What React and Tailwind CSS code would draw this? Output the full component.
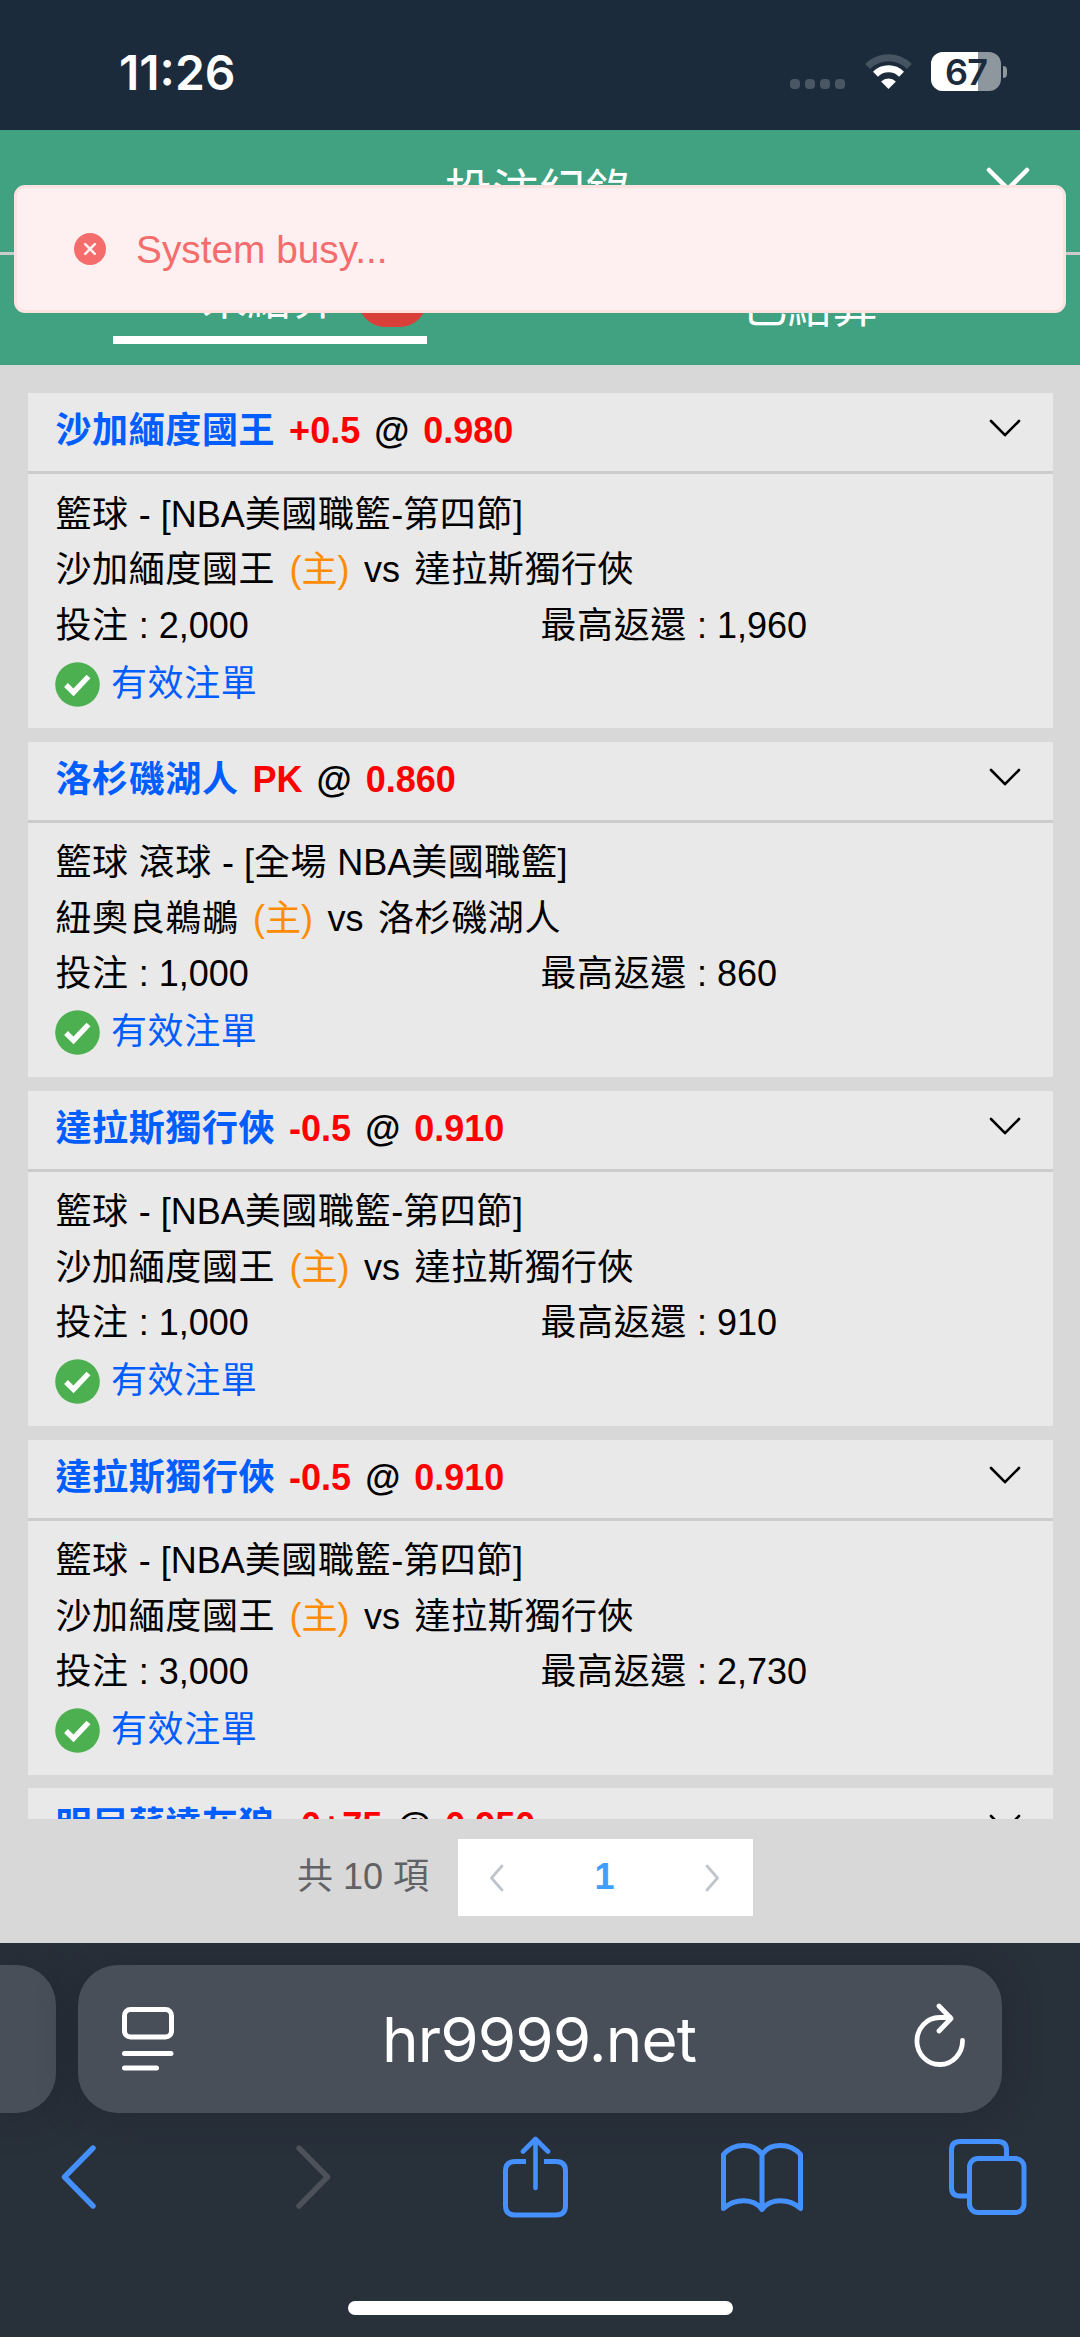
// src/App.jsx
import React from 'react';

const bets = [
  {
    pick: '沙加緬度國王',
    line: '+0.5',
    odds: '0.980',
    league: '籃球 - [NBA美國職籃-第四節]',
    home: '沙加緬度國王',
    away: '達拉斯獨行俠',
    stake: '2,000',
    payout: '1,960'
  },
  {
    pick: '洛杉磯湖人',
    line: 'PK',
    odds: '0.860',
    league: '籃球 滾球 - [全場 NBA美國職籃]',
    home: '紐奧良鵜鶘',
    away: '洛杉磯湖人',
    stake: '1,000',
    payout: '860'
  },
  {
    pick: '達拉斯獨行俠',
    line: '-0.5',
    odds: '0.910',
    league: '籃球 - [NBA美國職籃-第四節]',
    home: '沙加緬度國王',
    away: '達拉斯獨行俠',
    stake: '1,000',
    payout: '910'
  },
  {
    pick: '達拉斯獨行俠',
    line: '-0.5',
    odds: '0.910',
    league: '籃球 - [NBA美國職籃-第四節]',
    home: '沙加緬度國王',
    away: '達拉斯獨行俠',
    stake: '3,000',
    payout: '2,730'
  },
  {
    pick: '明尼蘇達灰狼',
    line: '-0+75',
    odds: '0.950'
  }
];

// Chinese runs are set slightly looser than the latin text
const Zh = ({ children }) =>
  children.split(/([\u4e00-\u9fff]+)/).map((part, i) =>
    i % 2 ? (
      <span key={i} className="tracking-[0.6px]">{part}</span>
    ) : (
      part
    )
  );

const StatusBar = () => (
  <div className="flex h-[130px] shrink-0 bg-[#1b2b3b] text-white">
    <div className="ml-[119px] mt-[44px] w-[671px] font-['Inter',sans-serif] text-[48px] font-semibold leading-[57px]">
      11:26
    </div>
    <div className="mt-[79px] flex h-[10px] gap-[5px]">
      <span className="size-[10px] rounded-[4px] bg-[#4a5663]" />
      <span className="size-[10px] rounded-[4px] bg-[#4a5663]" />
      <span className="size-[10px] rounded-[4px] bg-[#4a5663]" />
      <span className="size-[10px] rounded-[4px] bg-[#4a5663]" />
    </div>
    <svg className="ml-[20px] mt-[53px]" width="47" height="37" viewBox="0 0 47 37" fill="none">
      <path d="M2.7 13.4a29.5 29.5 0 0 1 41.6 0" stroke="#465361" strokeWidth="7" />
      <path d="M10.5 21.2a18.4 18.4 0 0 1 26 0" stroke="#fff" strokeWidth="7" />
      <path d="M23.5 36l-7.4-7.6a10.6 10.6 0 0 1 14.8 0z" fill="#fff" />
    </svg>
    <div className="relative ml-[19px] mt-[52px] flex h-[39px] w-[70px] overflow-hidden rounded-[12px] bg-[#8e969e]">
      <span className="w-[47px] bg-white" />
      <span className="absolute inset-0 text-center font-['Inter',sans-serif] text-[36px] font-semibold leading-[40px] tracking-[-1px] text-[#1b2b3b]">
        67
      </span>
    </div>
    <span className="ml-[2px] mt-[66px] h-[12px] w-[4px] rounded-r-[4px] bg-[#8e969e]" />
  </div>
);

const Toast = () => (
  <div className="absolute left-[14px] top-[185px] z-10 flex h-[128px] w-[1052px] items-center rounded-[11px] border-[3px] border-[#fde2e2] bg-[#fef0f0] pl-[57px]">
    <svg width="32" height="32" viewBox="0 0 32 32">
      <circle cx="16" cy="16" r="16" fill="#f56c6c" />
      <path d="M11.2 11.2l9.6 9.6M20.8 11.2l-9.6 9.6" stroke="#fef0f0" strokeWidth="2.6" strokeLinecap="round" />
    </svg>
    <span className="ml-[30px] mt-[2px] text-[38.8px] leading-[42px] text-[#f56c6c]">System busy...</span>
  </div>
);

const Header = () => (
  <header className="h-[235px] shrink-0 bg-[#40a280] text-white">
    <div className="flex h-[125px] items-center justify-end border-b-[3px] border-[#ccc] pr-[49px]">
      <h1 className="mr-[352px] mt-[2px] text-[47px] leading-[60px]">投注紀錄</h1>
      <svg className="mt-[-4px]" width="46" height="46" viewBox="0 0 46 46" fill="none">
        <path d="M4 4l38 38M42 4L4 42" stroke="#fff" strokeWidth="4.5" strokeLinecap="round" />
      </svg>
    </div>
    <div className="flex h-[110px]">
      <div className="flex w-1/2 justify-center">
        <div className="flex h-[89px] w-[314px] items-start border-b-[8px] border-white pl-[89px] pt-[15px]">
          <span className="text-[45px] leading-[60px]">未結算</span>
          <span className="ml-[21px] mt-[2px] h-[55px] w-[69px] rounded-full bg-[#d9403a] text-center text-[36px] leading-[54px]">10</span>
        </div>
      </div>
      <div className="flex w-1/2 justify-center pt-[23px] text-[45px] leading-[60px]">已結算</div>
    </div>
  </header>
);

const BetCard = ({ bet }) => (
  <div className="mb-[13.85px] h-[335px] bg-[#e9e9e9] text-[36px] text-black">
    <div className="flex h-[81px] justify-between border-b-[3px] border-[#ccc] pl-[28px] pr-[31px]">
      <div className="flex gap-[14px] whitespace-nowrap pt-[10px] font-bold leading-[55px]">
        <span className="text-[#005dff]"><Zh>{bet.pick}</Zh></span>
        <span className="text-[#f00]">{bet.line}</span>
        <span>@</span>
        <span className="text-[#f00]">{bet.odds}</span>
      </div>
      <svg className="mt-[25px]" width="34" height="20" viewBox="0 0 34 20" fill="none">
        <path d="M3 3l14 14.2L31 3" stroke="#000" strokeWidth="2.6" strokeLinecap="round" strokeLinejoin="round" />
      </svg>
    </div>
    {bet.league && (
      <div className="pl-[28px] pt-[12.5px] leading-[55.5px]">
        <div><Zh>{bet.league}</Zh></div>
        <div className="flex gap-[14.5px]">
          <span><Zh>{bet.home}</Zh></span>
          <span className="text-[#ff8c00]">(主)</span>
          <span>vs</span>
          <span><Zh>{bet.away}</Zh></span>
        </div>
        <div className="flex">
          <span className="w-[485px]"><Zh>{`投注 : ${bet.stake}`}</Zh></span>
          <span><Zh>{`最高返還 : ${bet.payout}`}</Zh></span>
        </div>
        <div className="ml-[-1px] mt-[9px] flex h-[44px] items-center">
          <svg width="45" height="45" viewBox="0 0 45 45" fill="none">
            <circle cx="22.5" cy="22.5" r="22.3" fill="#4caf50" />
            <path d="M11 23l7.5 7.4L33.5 14.5" stroke="#fff" strokeWidth="5.4" />
          </svg>
          <span className="ml-[11.5px] mt-[-1px] leading-[44px] text-[#005dff]"><Zh>有效注單</Zh></span>
        </div>
      </div>
    )}
  </div>
);

const Pagination = () => (
  <div className="flex h-[124px] shrink-0 pl-[297px] pt-[20px] text-[36px] leading-[75px]">
    <span className="w-[161px] text-[#606266]">共 10 項</span>
    <div className="flex h-[77px] w-[295px] items-center justify-between bg-white pl-[31px] pr-[33px]">
      <svg width="16" height="28" viewBox="0 0 16 28" fill="none">
        <path d="M13 2L2.5 14 13 26" stroke="#c0c4cc" strokeWidth="2.8" strokeLinecap="round" strokeLinejoin="round" />
      </svg>
      <span className="mt-[-2px] font-bold text-[#409eff]">1</span>
      <svg width="16" height="28" viewBox="0 0 16 28" fill="none">
        <path d="M3 2l10.5 12L3 26" stroke="#c0c4cc" strokeWidth="2.8" strokeLinecap="round" strokeLinejoin="round" />
      </svg>
    </div>
  </div>
);

const BrowserBar = () => (
  <footer className="h-[394px] shrink-0 overflow-hidden bg-[#28303a] pt-[22px]">
    <div className="flex h-[148px]">
      <div className="w-[56px] rounded-r-[40px] bg-[#484f59] shadow-[0_0_36px_rgba(28,34,44,0.5)]" />
      <div className="ml-[22px] flex w-[924px] items-center rounded-[40px] bg-[#484f59] pl-[44px] text-white shadow-[0_0_36px_rgba(28,34,44,0.5)]">
        <svg width="52" height="64" viewBox="0 0 52 64" fill="none" stroke="#fff" strokeWidth="5" strokeLinecap="round">
          <rect x="2.5" y="2.5" width="47" height="27.5" rx="6" />
          <path d="M2.5 46.5h46.5M2.5 61h32" />
        </svg>
        <span className="ml-[208px] mt-[2px] w-[530px] font-['Inter',sans-serif] text-[62px] leading-[76px] tracking-[-0.9px]">hr9999.net</span>
        <svg className="mt-[-6px] shrink-0" width="54" height="68" viewBox="0 0 54 68" fill="none" stroke="#fff" strokeWidth="4.8" strokeLinecap="round" strokeLinejoin="round">
          <path d="M50.5 38.5A22.8 23.5 0 1 1 27.5 15.5H38" />
          <path d="M27 4l12 12.5L27 29" />
        </svg>
      </div>
    </div>
    <div className="mt-[23px] flex h-[82px] items-center">
      <svg className="ml-[61px]" width="36" height="64" viewBox="0 0 36 64" fill="none">
        <path d="M32 3L3.5 32 32 61" stroke="#4590ff" strokeWidth="5.4" strokeLinecap="round" strokeLinejoin="round" />
      </svg>
      <svg className="ml-[199px]" width="36" height="64" viewBox="0 0 36 64" fill="none">
        <path d="M3 3l28.5 29L3 61" stroke="#4c515a" strokeWidth="5.4" strokeLinecap="round" strokeLinejoin="round" />
      </svg>
      <svg className="ml-[171px]" width="65" height="82" viewBox="0 0 65 82" fill="none" stroke="#4590ff" strokeWidth="5">
        <path d="M23 25.5H12q-9.5 0-9.5 9.5v34.5q0 9.5 9.5 9.5h41q9.5 0 9.5-9.5V35q0-9.5-9.5-9.5H41" />
        <path d="M32.5 52V4M20 15.5L32.5 3 45 15.5" strokeLinecap="round" strokeLinejoin="round" strokeWidth="4.6" />
      </svg>
      <svg className="ml-[153px]" width="82" height="70" viewBox="0 0 82 70" fill="none" stroke="#4590ff" strokeWidth="5" strokeLinejoin="round">
        <path d="M41 12.5C33 .5 13 .5 2.5 12.5V66.5C14 56 33 56 41 67.5C49 56 68 56 79.5 66.5V12.5C69 .5 49 .5 41 12.5V67" />
      </svg>
      <svg className="ml-[146px]" width="78" height="76" viewBox="0 0 78 76" fill="none" stroke="#4590ff" strokeWidth="5">
        <path d="M18 57h-7q-8.5 0-8.5-8.5V11q0-8.5 8.5-8.5h38q8.5 0 8.5 8.5v6" />
        <rect x="20.5" y="19.5" width="54.5" height="54" rx="8.5" />
      </svg>
    </div>
    <div className="mx-auto mt-[83px] h-[14px] w-[385px] rounded-full bg-white" />
  </footer>
);

const App = () => (
  <div className="relative flex h-[2337px] w-[1080px] flex-col overflow-hidden bg-[#d8d8d8] font-['Liberation_Sans','Noto_Sans_CJK_TC',sans-serif]">
    <StatusBar />
    <Header />
    <Toast />
    <main className="h-[1454px] shrink-0 overflow-hidden px-[27.5px] pt-[28px]">
      {bets.map((bet, i) => (
        <BetCard key={i} bet={bet} />
      ))}
    </main>
    <Pagination />
    <BrowserBar />
  </div>
);

export default App;
